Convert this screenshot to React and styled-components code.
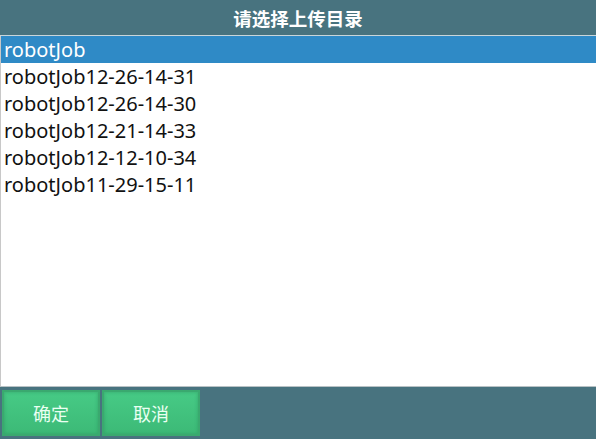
import React, { useState } from 'react'
import styled, { createGlobalStyle } from 'styled-components'

const GlobalCSS = createGlobalStyle`
  * {
    box-sizing: border-box;
  }
  html, body {
    margin: 0;
    padding: 0;
    background-color: #48737f;
  }
  body {
    font-family: "Noto Sans", "Noto Sans CJK SC", sans-serif;
  }
`

const Dialog = styled.div`
  width: 596px;
  height: 439px;
  display: flex;
  flex-direction: column;
  background-color: #48737f;
`

const Title = styled.div`
  height: 36px;
  display: flex;
  align-items: center;
  justify-content: center;
  color: #ffffff;
  font-family: "Noto Sans CJK SC", sans-serif;
  font-weight: 700;
  font-size: 18.5px;
  border-bottom: 1px solid #c9d6da;
`

const List = styled.ul`
  flex: 1;
  margin: 0;
  padding: 0;
  list-style: none;
  background-color: #ffffff;
  border-left: 1px solid #c8c8c8;
  border-bottom: 1px solid #b9c2c5;
`

const Row = styled.li`
  height: 27px;
  display: flex;
  align-items: center;
  padding-left: 3px;
  font-size: 20px;
  color: ${({ selected }) => (selected ? '#ffffff' : '#111111')};
  background-color: ${({ selected }) => (selected ? '#2f8ac6' : 'transparent')};
  cursor: pointer;
`

const Footer = styled.div`
  height: 52px;
  display: flex;
  gap: 2px;
  padding: 3px 2px 2px 2px;
`

const Button = styled.button`
  width: 98px;
  height: 46px;
  border: 0;
  padding: 0;
  font-family: "Noto Sans CJK SC", sans-serif;
  font-size: 18px;
  color: #eafff2;
  background: linear-gradient(#47cb86, #3cb976);
  box-shadow: inset 0 0 0 2px #3aa96f, inset 0 0 3px 3px rgba(40, 140, 90, 0.35);
  cursor: pointer;
`

const dirs = [
  'robotJob',
  'robotJob12-26-14-31',
  'robotJob12-26-14-30',
  'robotJob12-21-14-33',
  'robotJob12-12-10-34',
  'robotJob11-29-15-11',
]

export default function App() {
  const [selected, setSelected] = useState(0)
  return (
    <>
      <GlobalCSS />
      <Dialog>
        <Title>请选择上传目录</Title>
        <List>
          {dirs.map((d, i) => (
            <Row key={d} selected={i === selected} onClick={() => setSelected(i)}>
              {d}
            </Row>
          ))}
        </List>
        <Footer>
          <Button>确定</Button>
          <Button>取消</Button>
        </Footer>
      </Dialog>
    </>
  )
}
